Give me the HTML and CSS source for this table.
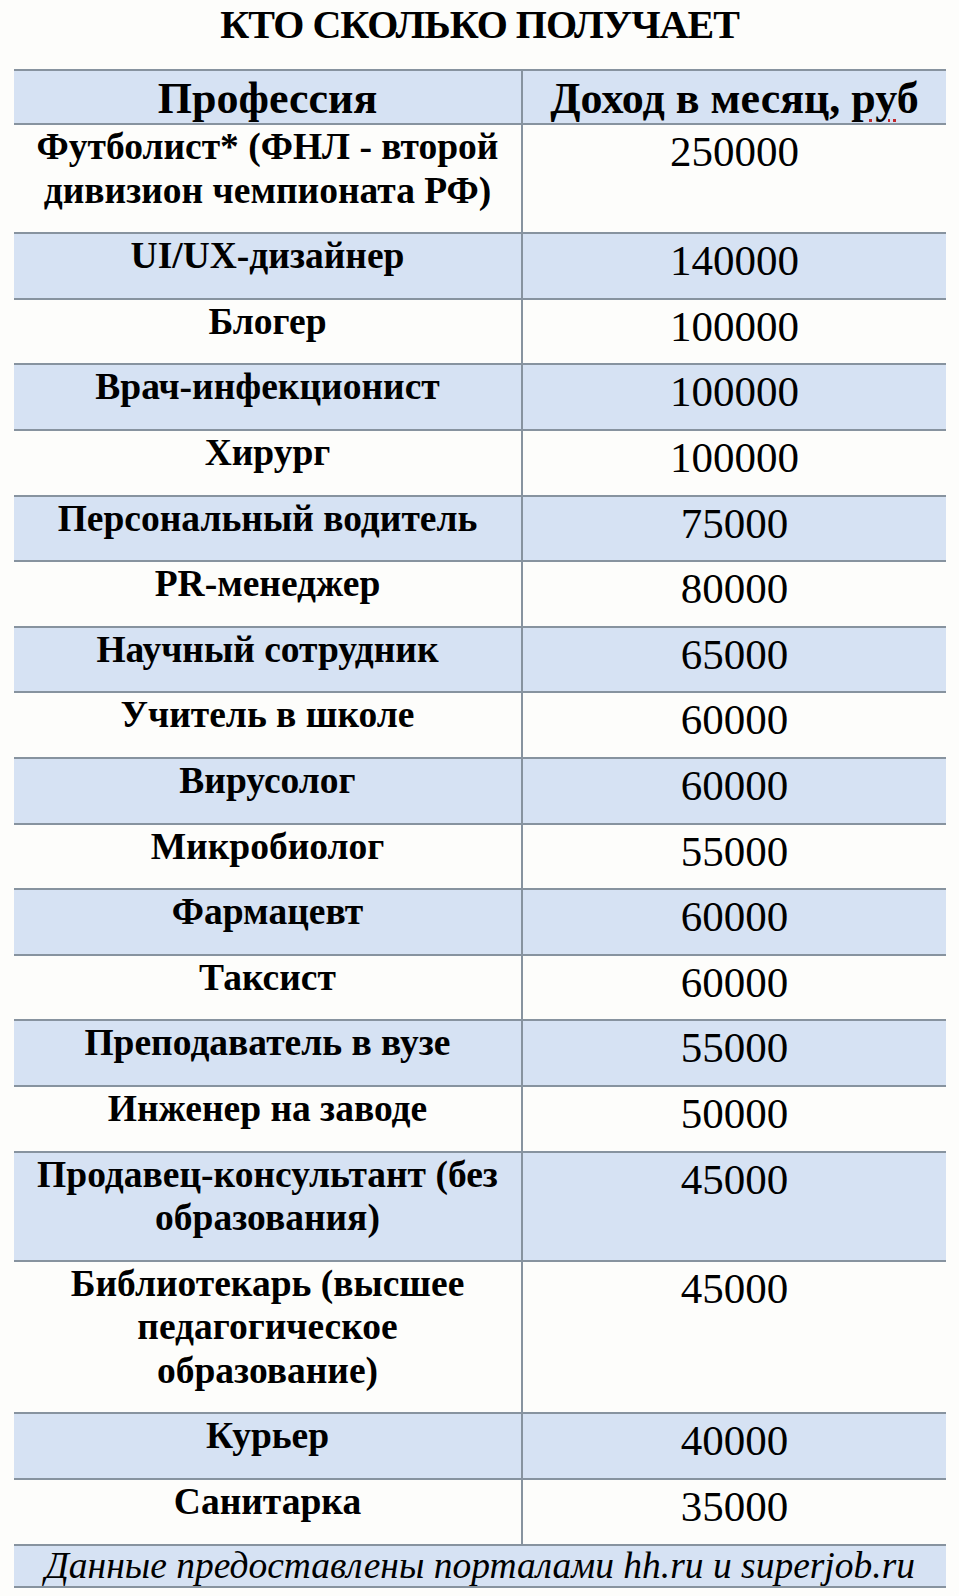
FILE: index.html
```html
<!DOCTYPE html>
<html lang="ru">
<head>
<meta charset="utf-8">
<title>Кто сколько получает</title>
<link rel="stylesheet" href="styles.css">
</head>
<body>
<div class="page">
  <h1 class="title">КТО СКОЛЬКО ПОЛУЧАЕТ</h1>
  <table class="salary">
    <thead>
      <tr class="head">
        <th class="prof">Профессия</th>
        <th class="pay">Доход в месяц, <span class="spell">ру</span>б</th>
      </tr>
    </thead>
    <tbody>
      <tr><td class="prof">Футболист* (ФНЛ - второй дивизион чемпионата РФ)</td><td class="pay">250000</td></tr>
      <tr class="alt"><td class="prof">UI/UX-дизайнер</td><td class="pay">140000</td></tr>
      <tr><td class="prof">Блогер</td><td class="pay">100000</td></tr>
      <tr class="alt"><td class="prof">Врач-инфекционист</td><td class="pay">100000</td></tr>
      <tr><td class="prof">Хирург</td><td class="pay">100000</td></tr>
      <tr class="alt"><td class="prof">Персональный водитель</td><td class="pay">75000</td></tr>
      <tr><td class="prof">PR-менеджер</td><td class="pay">80000</td></tr>
      <tr class="alt"><td class="prof">Научный сотрудник</td><td class="pay">65000</td></tr>
      <tr><td class="prof">Учитель в школе</td><td class="pay">60000</td></tr>
      <tr class="alt"><td class="prof">Вирусолог</td><td class="pay">60000</td></tr>
      <tr><td class="prof">Микробиолог</td><td class="pay">55000</td></tr>
      <tr class="alt"><td class="prof">Фармацевт</td><td class="pay">60000</td></tr>
      <tr><td class="prof">Таксист</td><td class="pay">60000</td></tr>
      <tr class="alt"><td class="prof">Преподаватель в вузе</td><td class="pay">55000</td></tr>
      <tr><td class="prof">Инженер на заводе</td><td class="pay">50000</td></tr>
      <tr class="alt"><td class="prof">Продавец-консультант (без образования)</td><td class="pay">45000</td></tr>
      <tr><td class="prof">Библиотекарь (высшее педагогическое образование)</td><td class="pay">45000</td></tr>
      <tr class="alt"><td class="prof">Курьер</td><td class="pay">40000</td></tr>
      <tr><td class="prof">Санитарка</td><td class="pay">35000</td></tr>
    </tbody>
    <tfoot>
      <tr class="foot"><td colspan="2">Данные предоставлены порталами hh.ru и superjob.ru</td></tr>
    </tfoot>
  </table>
</div>
</body>
</html>
```

FILE: styles.css
```css
html, body {
  margin: 0;
  padding: 0;
  background: #fdfdfb;
}

.page {
  width: 959px;
  font-family: "Liberation Serif", "Times New Roman", serif;
  color: #000;
}

.title {
  margin: 0;
  height: 69px;
  box-sizing: border-box;
  padding-top: 4px;
  text-align: center;
  font-size: 40px;
  line-height: 42px;
  font-weight: bold;
  letter-spacing: -1px;
}

.salary {
  margin-left: 14px;
  width: 932px;
  border-collapse: collapse;
  table-layout: fixed;
}

.salary th,
.salary td {
  border-top: 2px solid #87939f;
  padding: 0;
  vertical-align: top;
  text-align: center;
}

.salary .prof {
  width: 507px;
  padding: 0 20px 20px;
  font-size: 37.5px;
  line-height: 43.6px;
  font-weight: bold;
}

.salary .pay {
  border-left: 2px solid #87939f;
  padding: 5px 0 15px;
  font-size: 43px;
  line-height: 43.6px;
  font-weight: normal;
}

.salary .head th {
  background: #d6e2f3;
  height: 48px;
  padding: 4px 0 0;
  font-size: 44px;
  line-height: 48px;
  font-weight: bold;
}

.spell {
  text-decoration: underline dotted #c0262b;
  text-decoration-thickness: 3px;
  text-underline-offset: 6px;
}

.salary tr.alt td {
  background: #d6e2f3;
}

.salary .foot td {
  background: #d6e2f3;
  border-bottom: 2px solid #87939f;
  height: 40px;
  padding: 0;
  font-style: italic;
  font-size: 37.5px;
  line-height: 40px;
  white-space: nowrap;
}
```
